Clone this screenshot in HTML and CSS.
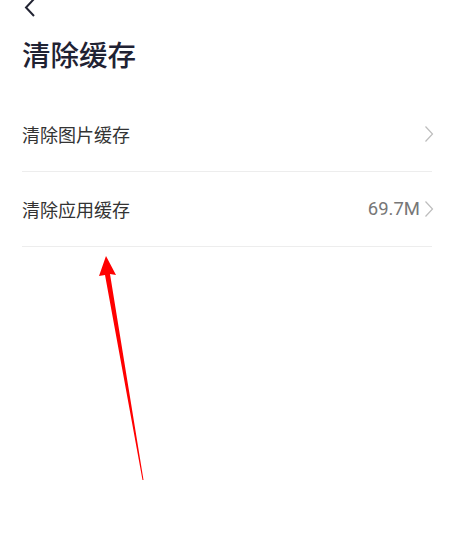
FILE: index.html
```html
<!DOCTYPE html>
<html lang="zh">
<head>
<meta charset="utf-8">
<link rel="stylesheet" href="styles.css">
</head>
<body>
<div class="page">
  <div class="navbar">
    <svg class="back" width="16" height="20" viewBox="0 0 16 20"><path d="M12 1 L4 9.5 L12 18" fill="none" stroke="#222433" stroke-width="2"/></svg>
  </div>
  <h1 class="title">清除缓存</h1>
  <div class="list">
    <div class="row">
      <span class="label">清除图片缓存</span>
      <span class="right">
        <svg class="chev" width="10" height="18" viewBox="0 0 10 18"><path d="M1.5 1.5 L8.5 9 L1.5 16.5" fill="none" stroke="#bdbdbd" stroke-width="1.2"/></svg>
      </span>
    </div>
    <div class="row">
      <span class="label">清除应用缓存</span>
      <span class="right">
        <span class="value">69.7M</span>
        <svg class="chev" width="10" height="18" viewBox="0 0 10 18"><path d="M1.5 1.5 L8.5 9 L1.5 16.5" fill="none" stroke="#bdbdbd" stroke-width="1.2"/></svg>
      </span>
    </div>
  </div>
  <svg class="arrow" width="461" height="547" viewBox="0 0 461 547">
    <polygon points="106,256 116,275 110,274 143.5,480 142.5,480 105,275 99,276" fill="#ff0000"/>
  </svg>
</div>
</body>
</html>
```

FILE: styles.css
```css
html, body {
  margin: 0;
  padding: 0;
  background: #ffffff;
}
body {
  font-family: "Noto Sans CJK SC", "Noto Sans", sans-serif;
}
.page {
  position: relative;
  width: 461px;
  height: 547px;
  overflow: hidden;
}
.navbar {
  height: 22px;
  padding-left: 22px;
}
.back {
  display: block;
  margin-top: -2px;
}
.title {
  margin: 10px 0 0 22px;
  font-size: 28.5px;
  font-weight: 500;
  line-height: 48px;
  color: #1f2233;
}
.list {
  margin: 19px 29px 0 22px;
}
.row {
  height: 74px;
  border-bottom: 1px solid #ededed;
  display: flex;
  align-items: center;
  justify-content: space-between;
}
.label {
  font-size: 18px;
  color: #333333;
}
.right {
  display: flex;
  align-items: center;
  gap: 4px;
}
.value {
  font-size: 18.5px;
  color: #777777;
  font-family: "Roboto", "Noto Sans", sans-serif;
}
.chev {
  display: block;
  margin-right: -2px;
}
.arrow {
  position: absolute;
  left: 0;
  top: 0;
}
```
